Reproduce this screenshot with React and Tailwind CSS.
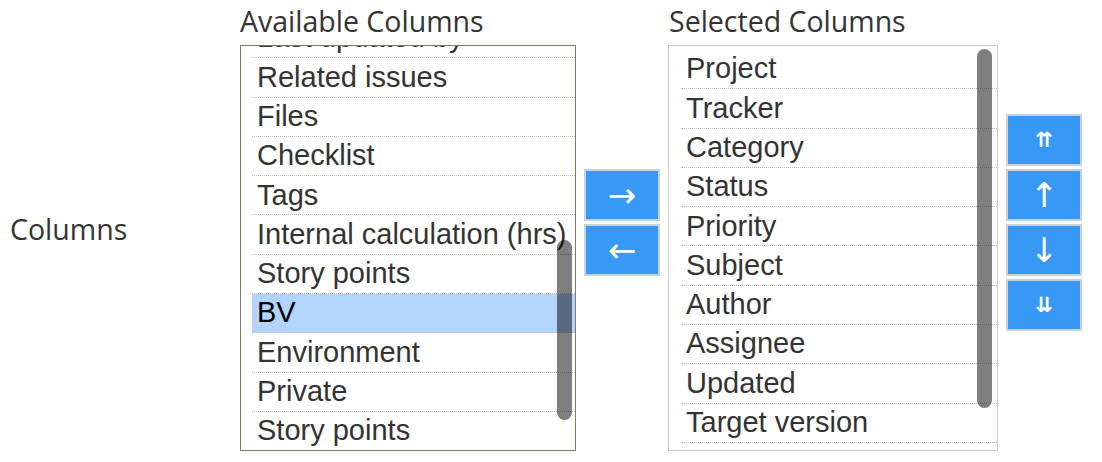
const availableColumns = [
  'Last updated by',
  'Related issues',
  'Files',
  'Checklist',
  'Tags',
  'Internal calculation (hrs)',
  'Story points',
  'BV',
  'Environment',
  'Private',
  'Story points',
];

const selectedColumns = [
  'Project',
  'Tracker',
  'Category',
  'Status',
  'Priority',
  'Subject',
  'Author',
  'Assignee',
  'Updated',
  'Target version',
];

function MoveButton({ children, small }) {
  return (
    <button
      type="button"
      className={`w-[76px] h-[52px] bg-[#3898f5] border-2 border-[#c9d1da] text-white flex items-center justify-center leading-none ${
        small ? 'text-[21px] font-bold' : 'text-[34px]'
      }`}
      style={{ fontFamily: '"DejaVu Sans", sans-serif' }}
    >
      {children}
    </button>
  );
}

function ListRow({ label, selected }) {
  return (
    <div
      className={`h-[39.3px] flex items-center pl-[5px] border-b border-dotted border-[#bdbdbd] whitespace-nowrap ${
        selected ? 'bg-[#b3d5fd] text-black' : 'text-[#333333]'
      }`}
    >
      {label}
    </div>
  );
}

export default function App() {
  const listFont = { fontFamily: '"Liberation Sans", Arial, sans-serif' };
  const labelFont = { fontFamily: '"Open Sans", sans-serif' };

  return (
    <div className="w-[1102px] h-[462px] bg-white flex items-start text-[#333333]">
      {/* Row label */}
      <div className="w-[240px] pl-[10px] mt-[210px] text-[28.5px] leading-[39px]" style={labelFont}>
        Columns
      </div>

      {/* Available columns */}
      <div className="flex flex-col">
        <div className="text-[28.5px] leading-[39px] mt-[2px] h-[43px] whitespace-nowrap" style={labelFont}>
          Available Columns
        </div>
        <div className="relative w-[336px] h-[406px] border border-[#7d7d5e] overflow-hidden text-[29px]" style={listFont}>
          <div className="pl-[11px] -mt-[27px]">
            {availableColumns.map((col, i) => (
              <ListRow key={`${col}-${i}`} label={col} selected={col === 'BV'} />
            ))}
          </div>
          {/* overlay scrollbar */}
          <div className="absolute left-[316px] top-[194px] w-[15px] h-[180px] rounded-full bg-black/50" />
        </div>
      </div>

      {/* Add / remove buttons */}
      <div className="flex flex-col gap-[3px] ml-[8px] mt-[169px]">
        <MoveButton>→</MoveButton>
        <MoveButton>←</MoveButton>
      </div>

      {/* Selected columns */}
      <div className="flex flex-col ml-[8px]">
        <div className="text-[28.5px] leading-[39px] mt-[2px] h-[43px] pl-[1px] whitespace-nowrap" style={labelFont}>
          Selected Columns
        </div>
        <div className="relative w-[330px] h-[406px] border border-[#cfcfcf] overflow-hidden text-[29px]" style={listFont}>
          <div className="pl-[12px] pt-[4px]">
            {selectedColumns.map((col) => (
              <ListRow key={col} label={col} />
            ))}
          </div>
          <div className="absolute left-[308px] top-[3px] w-[15px] h-[359px] rounded-full bg-black/50" />
        </div>
      </div>

      {/* Order buttons */}
      <div className="flex flex-col gap-[3px] ml-[8px] mt-[114px]">
        <MoveButton small>⇈</MoveButton>
        <MoveButton>↑</MoveButton>
        <MoveButton>↓</MoveButton>
        <MoveButton small>⇊</MoveButton>
      </div>
    </div>
  );
}
